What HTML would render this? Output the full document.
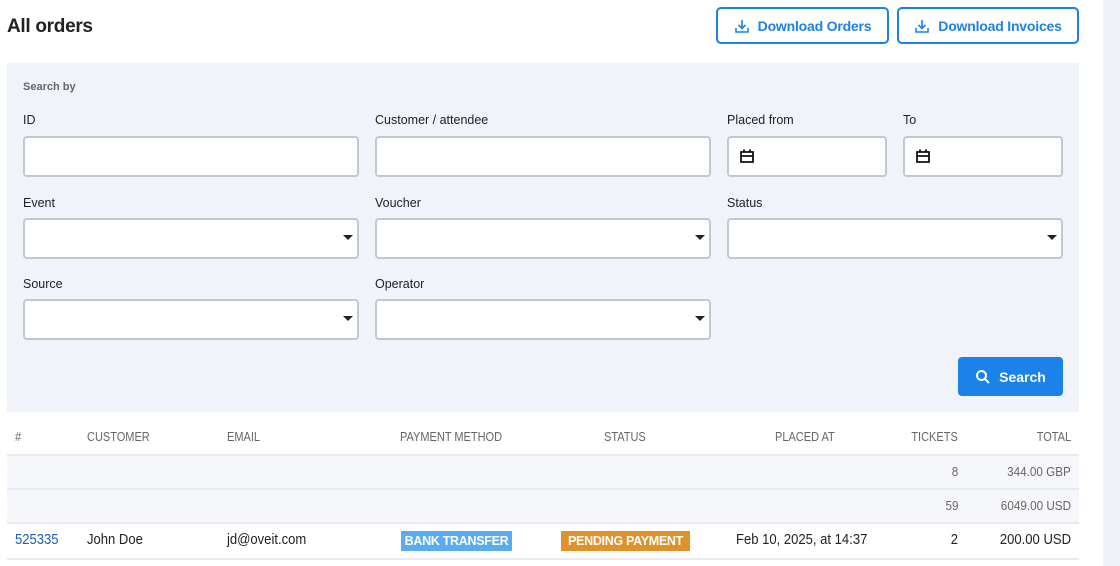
<!DOCTYPE html>
<html><head><style>
body{margin:0;width:1120px;height:566px;overflow:hidden;background:#fff;font-family:"Liberation Sans",sans-serif;position:relative;color:#222}
.a{position:absolute}
.strip{left:1103px;top:0;width:17px;height:566px;background:#eef1f8}
h1{position:absolute;left:7px;top:16px;margin:0;font-size:19px;font-weight:600;color:#222;letter-spacing:-0.3px}
.btn{position:absolute;top:7px;height:37px;border:2px solid #1a82e8;border-radius:5px;box-sizing:border-box;color:#1a82e8;font-size:14px;font-weight:600;display:flex;align-items:center;justify-content:center;gap:8px;letter-spacing:-0.2px}
.panel{left:7px;top:63px;width:1072px;height:349px;background:#f0f3fa}
.lbl{position:absolute;font-size:12.5px;color:#222}
.in{position:absolute;height:41px;border:2px solid #c4c7cd;border-radius:4px;background:#fff;box-sizing:border-box}
.sel::after{content:"";position:absolute;right:4px;top:15px;border-left:5px solid transparent;border-right:5px solid transparent;border-top:5px solid #222}
.cal{position:absolute;left:10px;top:10px}
.search{left:958px;top:357px;width:105px;height:39px;background:#1a82e8;border-radius:4px;color:#fff;font-size:14px;font-weight:600;display:flex;align-items:center;justify-content:center;gap:8px}
.th{position:absolute;top:430px;font-size:12.5px;color:#666;transform:scaleX(.88);transform-origin:left center}
.t{position:absolute;font-size:14.5px;color:#222;transform:scaleX(.9);transform-origin:left center}
.th.r,.t.r{transform-origin:right center}
.row{position:absolute;left:7px;width:1072px}
.line{position:absolute;left:7px;width:1072px;height:2px;background:#e8eaf0}
.g{font-size:13px;color:#666}
.badge{position:absolute;top:531px;height:20px;color:#fff;font-size:12.5px;font-weight:600;display:flex;align-items:center;justify-content:center;letter-spacing:-0.3px}
</style></head><body>
<div class="a strip"></div>
<h1>All orders</h1>
<div class="btn" style="left:716px;width:173px"><svg width="16" height="16" viewBox="0 0 16 16" fill="none" stroke="#1a82e8" stroke-width="1.6"><path d="M8 2v8M4.5 7L8 10.5 11.5 7M2 10v4h12v-4"/></svg>Download Orders</div>
<div class="btn" style="left:897px;width:182px"><svg width="16" height="16" viewBox="0 0 16 16" fill="none" stroke="#1a82e8" stroke-width="1.6"><path d="M8 2v8M4.5 7L8 10.5 11.5 7M2 10v4h12v-4"/></svg>Download Invoices</div>
<div class="a panel"></div>
<div class="lbl" style="left:23px;top:81px;font-size:11px;color:#666;font-weight:600">Search by</div>
<div class="lbl" style="left:23px;top:113px">ID</div>
<div class="lbl" style="left:375px;top:113px">Customer / attendee</div>
<div class="lbl" style="left:727px;top:113px">Placed from</div>
<div class="lbl" style="left:903px;top:113px">To</div>
<div class="in" style="left:23px;top:136px;width:336px"></div>
<div class="in" style="left:375px;top:136px;width:336px"></div>
<div class="in" style="left:727px;top:136px;width:160px"><svg class="cal" width="16" height="16" viewBox="0 0 16 16" fill="none" stroke="#111" stroke-width="1.8"><path d="M2 4h12v10H2zM2 8h12M5 1.5v3M11 1.5v3"/></svg></div>
<div class="in" style="left:903px;top:136px;width:160px"><svg class="cal" width="16" height="16" viewBox="0 0 16 16" fill="none" stroke="#111" stroke-width="1.8"><path d="M2 4h12v10H2zM2 8h12M5 1.5v3M11 1.5v3"/></svg></div>
<div class="lbl" style="left:23px;top:196px">Event</div>
<div class="lbl" style="left:375px;top:196px">Voucher</div>
<div class="lbl" style="left:727px;top:196px">Status</div>
<div class="in sel" style="left:23px;top:218px;width:336px"></div>
<div class="in sel" style="left:375px;top:218px;width:336px"></div>
<div class="in sel" style="left:727px;top:218px;width:336px"></div>
<div class="lbl" style="left:23px;top:277px">Source</div>
<div class="lbl" style="left:375px;top:277px">Operator</div>
<div class="in sel" style="left:23px;top:299px;width:336px"></div>
<div class="in sel" style="left:375px;top:299px;width:336px"></div>
<div class="a search"><svg width="16" height="16" viewBox="0 0 16 16" fill="none" stroke="#fff" stroke-width="2"><circle cx="6.5" cy="6.5" r="4.5"/><path d="M10 10l4 4"/></svg>Search</div>
<div class="th" style="left:15px">#</div>
<div class="th" style="left:87px">CUSTOMER</div>
<div class="th" style="left:227px">EMAIL</div>
<div class="th" style="left:400px">PAYMENT METHOD</div>
<div class="th" style="left:604px">STATUS</div>
<div class="th" style="left:775px">PLACED AT</div>
<div class="th r" style="right:162px">TICKETS</div>
<div class="th r" style="right:49px">TOTAL</div>
<div class="line" style="top:454px"></div>
<div class="row" style="top:456px;height:32px;background:#f6f7fb"></div>
<div class="line" style="top:488px"></div>
<div class="row" style="top:490px;height:32px;background:#f6f7fb"></div>
<div class="line" style="top:522px"></div>
<div class="line" style="top:558px"></div>
<div class="t g r" style="right:162px;top:464px">8</div>
<div class="t g r" style="right:49px;top:464px">344.00 GBP</div>
<div class="t g r" style="right:162px;top:498px">59</div>
<div class="t g r" style="right:49px;top:498px">6049.00 USD</div>
<div class="t" style="left:15px;top:532px;color:#1a5fb4">525335</div>
<div class="t" style="left:87px;top:532px">John Doe</div>
<div class="t" style="left:227px;top:532px">jd@oveit.com</div>
<div class="badge" style="left:401px;width:111px;background:#5aacf1">BANK TRANSFER</div>
<div class="badge" style="left:561px;width:129px;background:#e0922a">PENDING PAYMENT</div>
<div class="t" style="left:736px;top:532px">Feb 10, 2025, at 14:37</div>
<div class="t r" style="right:162px;top:532px">2</div>
<div class="t r" style="right:49px;top:532px">200.00 USD</div>
</body></html>
